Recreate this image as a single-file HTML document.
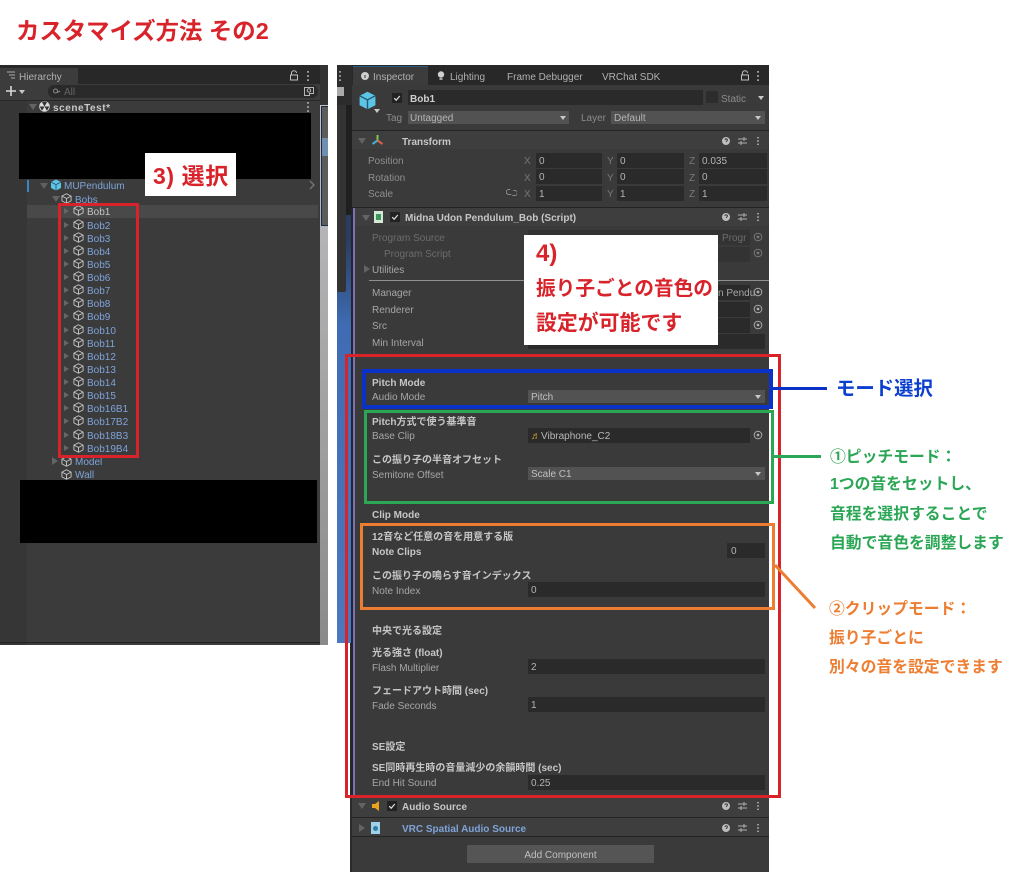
<!DOCTYPE html>
<html lang="ja"><head><meta charset="utf-8"><title>カスタマイズ方法 その2</title>
<style>
html,body{margin:0;padding:0;background:#fff}
#p{position:relative;width:1024px;height:877px;overflow:hidden;background:#fff;font-family:"Liberation Sans","Noto Sans CJK JP",sans-serif;filter:blur(.35px)}
#p div,#p span,#p svg{position:absolute}
.t{font-size:10px;line-height:12px;height:12px;white-space:nowrap;color:#a6a6a6;margin-top:2px}
.b{font-weight:bold;color:#c6c6c6}
.d{color:#707070}
.f{background:#2a2a2a;height:15px}
.dd{background:#525252;height:13px}
.v{font-size:10px;line-height:14px;color:#b4b4b4;white-space:nowrap;left:3px;top:2px}
.r{left:0;width:300px;height:12px}
.r svg{width:11px;height:11px;left:73px;top:0}
.r span{left:87px;top:2px;font-size:10px;line-height:12px;color:#7ea3d9;white-space:nowrap}
.r i{position:absolute;left:64px;top:3px;width:0;height:0;border-left:5px solid #666;border-top:3px solid transparent;border-bottom:3px solid transparent}
.sep{left:352px;width:417px;height:1px;background:#232323}
.box{box-sizing:border-box;background:transparent}
.ar{width:0;height:0;border-left:3px solid transparent;border-right:3px solid transparent;border-top:4px solid #c8c8c8}
.tr{width:0;height:0;border-left:4px solid transparent;border-right:4px solid transparent;border-top:6px solid #636363}
.tl{width:0;height:0;border-left:6px solid #636363;border-top:4px solid transparent;border-bottom:4px solid transparent}
.ck{width:10px;height:10px;background:#222}
.ann{font-weight:bold;white-space:nowrap}
</style></head><body>
<svg width="0" height="0" style="position:absolute"><defs>
<symbol id="c" viewBox="0 0 12 12"><path d="M6 .8 11 3.4v5.2L6 11.2 1 8.6V3.4zM1 3.4 6 6l5-2.6M6 6v5.2" fill="none" stroke="#c6c6c6" stroke-width="1"/></symbol>
<symbol id="k" viewBox="0 0 12 12"><path d="M6 .5 11 3v6L6 11.5 1 9V3z" fill="#5cc4e6"/><path d="M1 3 6 5.6 11 3M6 5.6v5.9" fill="none" stroke="#2a5a70" stroke-width=".9"/></symbol>
<symbol id="h" viewBox="0 0 44 10"><circle cx="5" cy="5" r="4" fill="#bdbdbd"/><path d="M4 4c0-1.5 2.4-1.5 2.4 0 0 1-1.2 1-1.2 2" fill="none" stroke="#333" stroke-width=".9"/><path d="M17 3h9M17 7h9" stroke="#b0b0b0" stroke-width="1"/><path d="M23 1v4M20 5v4" stroke="#b0b0b0" stroke-width="1"/><path d="M37 1v1.4M37 4.3v1.4M37 7.6V9" stroke="#c0c0c0" stroke-width="1.5"/></symbol>
<symbol id="o" viewBox="0 0 10 10"><circle cx="5" cy="5" r="3.8" fill="none" stroke="#aaa"/><circle cx="5" cy="5" r="1.4" fill="#aaa"/></symbol>
<symbol id="m" viewBox="0 0 4 12"><path d="M2 1v1.8M2 5.1v1.8M2 9.2V11" stroke="#c0c0c0" stroke-width="1.5"/></symbol>
<symbol id="l" viewBox="0 0 10 11"><path d="M2.5 5V3a2.5 2.3 0 0 1 5 0M1.5 5h7v5h-7z" fill="none" stroke="#c0c0c0"/></symbol>
<symbol id="ch" viewBox="0 0 10 10"><path d="M2.2 5.2 4.2 7.2 7.8 3" fill="none" stroke="#ddd" stroke-width="1.2"/></symbol>
</defs></svg>
<div id="p">

<div class="ann" style="left:16px;top:15px;font-size:23.4px;line-height:32px;color:#d9232b">カスタマイズ方法 その2</div>

<!-- Hierarchy -->
<div style="left:0;top:65px;width:328px;height:580px;background:#3b3b3b"></div>
<div style="left:0;top:100px;width:27px;height:545px;background:#363636"></div>
<div style="left:0;top:65px;width:328px;height:19px;background:#282828"></div>
<div style="left:0;top:68px;width:78px;height:16px;background:#3c3c3c"></div>
<svg style="left:6px;top:71px" width="10" height="9" viewBox="0 0 10 9"><path d="M1 1h8M3 4h6M5 7h4" stroke="#aaa"/></svg>
<div class="t" style="left:19px;top:70px;color:#b0b0b0">Hierarchy</div>
<svg style="left:289px;top:70px" width="10" height="11"><use href="#l"/></svg>
<svg style="left:306px;top:70px" width="4" height="12"><use href="#m"/></svg>
<div style="left:0;top:84px;width:328px;height:16px;background:#3c3c3c;border-bottom:1px solid #262626"></div>
<svg style="left:5px;top:85px" width="12" height="12"><path d="M6 1v10M1 6h10" stroke="#d8d8d8" stroke-width="1.6"/></svg>
<div class="ar" style="left:19px;top:90px"></div>
<div style="left:48px;top:85px;width:270px;height:13px;background:#2a2a2a;border-radius:6px"></div>
<svg style="left:52px;top:87px" width="9" height="9"><circle cx="3.5" cy="4" r="2" fill="none" stroke="#888"/><path d="M5 5.5 8 4" stroke="#888"/></svg>
<div class="t" style="left:64px;top:85px;color:#666">All</div>
<svg style="left:303px;top:86px" width="12" height="11"><path d="M1.500 1.500h9v6h-4v2h-5z" fill="none" stroke="#b5b5b5"/><circle cx="6" cy="4.500" r="1.700" fill="none" stroke="#b5b5b5"/></svg>
<div class="tr" style="left:29px;top:104px"></div>
<svg style="left:39px;top:101px" width="11" height="11"><circle cx="5.500" cy="5.500" r="5.300" fill="#ddd"/><path d="M5.500 5.500 3 1.300A5 5 0 0 1 8 1.300zM5.500 5.500 10.300 5.500 8 9.800zM5.500 5.500 3 9.800 .7 5.500z" fill="#333"/></svg>
<div class="t b" style="left:53px;top:101px;letter-spacing:.55px;color:#c9c9c9">sceneTest*</div>
<svg style="left:306px;top:101px" width="4" height="12"><use href="#m"/></svg>
<div style="left:19px;top:113px;width:292px;height:66px;background:#000"></div>
<div style="left:27px;top:180px;width:2px;height:12px;background:#3a86c0"></div>
<div class="tr" style="left:40px;top:183px;border-top-color:#5f5f5f"></div>
<svg style="left:50px;top:179px" width="12" height="12"><use href="#k"/></svg>
<div class="t" style="left:64px;top:179px;color:#7ea3d9">MUPendulum</div>
<svg style="left:309px;top:180px" width="6" height="10"><path d="M1 1 5 5 1 9" fill="none" stroke="#777" stroke-width="1.300"/></svg>
<div class="tr" style="left:52px;top:196px"></div>
<svg style="left:61px;top:193px" width="11" height="11"><use href="#c"/></svg>
<div class="t" style="left:75px;top:193px;color:#7ea3d9">Bobs</div>
<div style="left:27px;top:205px;width:291px;height:13px;background:#494949"></div>

<div class="r" style="top:205px"><i></i><svg><use href="#c"/></svg><span style="color:#c4c4c4">Bob1</span></div>
<div class="r" style="top:219px"><i></i><svg><use href="#c"/></svg><span>Bob2</span></div>
<div class="r" style="top:232px"><i></i><svg><use href="#c"/></svg><span>Bob3</span></div>
<div class="r" style="top:245px"><i></i><svg><use href="#c"/></svg><span>Bob4</span></div>
<div class="r" style="top:258px"><i></i><svg><use href="#c"/></svg><span>Bob5</span></div>
<div class="r" style="top:271px"><i></i><svg><use href="#c"/></svg><span>Bob6</span></div>
<div class="r" style="top:284px"><i></i><svg><use href="#c"/></svg><span>Bob7</span></div>
<div class="r" style="top:297px"><i></i><svg><use href="#c"/></svg><span>Bob8</span></div>
<div class="r" style="top:310px"><i></i><svg><use href="#c"/></svg><span>Bob9</span></div>
<div class="r" style="top:324px"><i></i><svg><use href="#c"/></svg><span>Bob10</span></div>
<div class="r" style="top:337px"><i></i><svg><use href="#c"/></svg><span>Bob11</span></div>
<div class="r" style="top:350px"><i></i><svg><use href="#c"/></svg><span>Bob12</span></div>
<div class="r" style="top:363px"><i></i><svg><use href="#c"/></svg><span>Bob13</span></div>
<div class="r" style="top:376px"><i></i><svg><use href="#c"/></svg><span>Bob14</span></div>
<div class="r" style="top:389px"><i></i><svg><use href="#c"/></svg><span>Bob15</span></div>
<div class="r" style="top:402px"><i></i><svg><use href="#c"/></svg><span>Bob16B1</span></div>
<div class="r" style="top:415px"><i></i><svg><use href="#c"/></svg><span>Bob17B2</span></div>
<div class="r" style="top:429px"><i></i><svg><use href="#c"/></svg><span>Bob18B3</span></div>
<div class="r" style="top:442px"><i></i><svg><use href="#c"/></svg><span>Bob19B4</span></div>
<div class="tl" style="left:52px;top:457px"></div>
<svg style="left:61px;top:456px" width="11" height="11"><use href="#c"/></svg>
<div class="t" style="left:75px;top:455px;color:#7ea3d9">Model</div>
<svg style="left:61px;top:469px" width="11" height="11"><use href="#c"/></svg>
<div class="t" style="left:75px;top:468px;color:#7ea3d9">Wall</div>
<div style="left:20px;top:480px;width:297px;height:63px;background:#000"></div>

<div style="left:320px;top:105px;width:8px;height:540px;background:linear-gradient(#c2c4ca,#b0b0b2 30%,#8a8a8a 100%)"></div>
<div style="left:320px;top:65px;width:8px;height:40px;background:#333"></div>
<div style="left:321px;top:106px;width:7px;height:120px;background:#5c5c5c;border:1px solid #1c2a48;border-right:0;box-sizing:border-box"></div>
<div style="left:322px;top:138px;width:6px;height:18px;background:#6f8fb0"></div>
<div style="left:0;top:642px;width:320px;height:1px;background:#222"></div>

<!-- strip between -->
<div style="left:337px;top:65px;width:15px;height:578px;background:linear-gradient(#2a3c60 30%,#3f6cb4 45%,#4c78c0 100%)"></div>
<div style="left:337px;top:65px;width:15px;height:40px;background:#2c2c2c"></div>
<div style="left:337px;top:105px;width:15px;height:110px;background:#1f1f1f"></div>
<div style="left:337px;top:105px;width:9px;height:187px;background:#333;border-radius:0 0 2px 2px"></div>
<svg style="left:338px;top:70px" width="4" height="12"><use href="#m"/></svg>
<div style="left:337px;top:87px;width:7px;height:9px;background:#aaa"></div>

<!-- Inspector -->
<div style="left:352px;top:65px;width:417px;height:807px;background:#3a3a3a"></div>
<div style="left:350px;top:643px;width:2px;height:229px;background:#2a2a2a"></div>
<div style="left:352px;top:65px;width:417px;height:20px;background:#282828"></div>
<div style="left:353px;top:66px;width:75px;height:19px;background:#3c3c3c;border-top:1px solid #2a5a80;box-sizing:border-box"></div>
<svg style="left:361px;top:72px" width="8" height="8"><circle cx="4" cy="4" r="4" fill="#d0d0d0"/><path d="M4 3v3" stroke="#333"/></svg>
<div class="t" style="left:373px;top:70px;color:#b0b0b0">Inspector</div>
<svg style="left:437px;top:71px" width="8" height="10"><circle cx="4" cy="3.500" r="3.200" fill="#cfcfcf"/><path d="M2.500 8h3" stroke="#cfcfcf" stroke-width="1.500"/></svg>
<div class="t" style="left:450px;top:70px;color:#b0b0b0">Lighting</div>
<div class="t" style="left:507px;top:70px;color:#b0b0b0">Frame Debugger</div>
<div class="t" style="left:602px;top:70px;color:#b0b0b0">VRChat SDK</div>
<svg style="left:740px;top:70px" width="10" height="11"><use href="#l"/></svg>
<svg style="left:756px;top:70px" width="4" height="12"><use href="#m"/></svg>

<svg style="left:358px;top:91px" width="19" height="19"><use href="#k"/></svg>
<div class="ar" style="left:374px;top:109px"></div>
<div class="ck" style="left:392px;top:93px"></div>
<svg style="left:392px;top:93px" width="10" height="10"><use href="#ch"/></svg>
<div class="f" style="left:408px;top:90px;width:295px"></div>
<div class="t b" style="left:410px;top:92px;color:#cfcfcf">Bob1</div>
<div style="left:706px;top:91px;width:12px;height:12px;background:#2c2c2c"></div>
<div class="t" style="left:721px;top:92px;color:#8c8c8c">Static</div>
<div class="ar" style="left:758px;top:96px"></div>
<div class="t" style="left:386px;top:111px;color:#8c8c8c">Tag</div>
<div class="dd" style="left:408px;top:111px;width:161px"></div>
<div class="t" style="left:410px;top:111px;color:#b4b4b4">Untagged</div>
<div class="ar" style="left:560px;top:116px"></div>
<div class="t" style="left:581px;top:111px;color:#8c8c8c">Layer</div>
<div class="dd" style="left:611px;top:111px;width:154px"></div>
<div class="t" style="left:614px;top:111px;color:#b4b4b4">Default</div>
<div class="ar" style="left:755px;top:116px"></div>

<div class="sep" style="top:130px"></div>
<div style="left:352px;top:131px;width:417px;height:18px;background:#3e3e3e"></div>
<div class="tr" style="left:358px;top:138px"></div>
<svg style="left:371px;top:134px" width="13" height="13"><path d="M6.500 6.500V1" stroke="#7ec850" stroke-width="2"/><path d="M6.500 6.500 1.500 10" stroke="#3fb0e0" stroke-width="2"/><path d="M6.500 6.500 11.500 10" stroke="#e0604a" stroke-width="2"/></svg>
<div class="t b" style="left:402px;top:135px">Transform</div>
<svg style="left:721px;top:136px" width="44" height="10"><use href="#h"/></svg>

<div class="t" style="left:368px;top:154px;color:#8f8f8f">Position</div>
<div class="t" style="left:368px;top:171px;color:#8f8f8f">Rotation</div>
<div class="t" style="left:368px;top:187px;color:#8f8f8f">Scale</div>
<svg style="left:506px;top:188px" width="11" height="9"><path d="M4 1.500H2.500a2.500 2.500 0 0 0 0 5H5M7 2.500h1.500a2.500 2.500 0 0 1 0 5H6" transform="translate(.3 0)" fill="none" stroke="#8a8a8a"/></svg>
<div class="t" style="left:524px;top:154px;color:#777">X</div><div class="t" style="left:607px;top:154px;color:#777">Y</div><div class="t" style="left:689px;top:154px;color:#777">Z</div>
<div class="t" style="left:524px;top:171px;color:#777">X</div><div class="t" style="left:607px;top:171px;color:#777">Y</div><div class="t" style="left:689px;top:171px;color:#777">Z</div>
<div class="t" style="left:524px;top:187px;color:#777">X</div><div class="t" style="left:607px;top:187px;color:#777">Y</div><div class="t" style="left:689px;top:187px;color:#777">Z</div>
<div class="f" style="left:536px;top:153px;width:66px"><span class="v">0</span></div>
<div class="f" style="left:617px;top:153px;width:67px"><span class="v">0</span></div>
<div class="f" style="left:699px;top:153px;width:68px"><span class="v">0.035</span></div>
<div class="f" style="left:536px;top:169px;width:66px"><span class="v">0</span></div>
<div class="f" style="left:617px;top:169px;width:67px"><span class="v">0</span></div>
<div class="f" style="left:699px;top:169px;width:68px"><span class="v">0</span></div>
<div class="f" style="left:536px;top:186px;width:66px"><span class="v">1</span></div>
<div class="f" style="left:617px;top:186px;width:67px"><span class="v">1</span></div>
<div class="f" style="left:699px;top:186px;width:68px"><span class="v">1</span></div>

<div class="sep" style="top:207px"></div>
<div style="left:352px;top:208px;width:417px;height:18px;background:#3e3e3e"></div>
<div class="tr" style="left:362px;top:215px"></div>
<div style="left:374px;top:211px;width:9px;height:12px;background:#d8e8d8"></div>
<div style="left:376px;top:214px;width:5px;height:6px;background:#3a9a5a"></div>
<div class="ck" style="left:390px;top:212px"></div>
<svg style="left:390px;top:212px" width="10" height="10"><use href="#ch"/></svg>
<div class="t b" style="left:405px;top:211px">Midna Udon Pendulum_Bob (Script)</div>
<svg style="left:721px;top:212px" width="44" height="10"><use href="#h"/></svg>

<div style="left:353px;top:208px;width:2px;height:590px;background:#7a72b4"></div>
<div style="left:351px;top:208px;width:2px;height:590px;background:#262626"></div>

<div class="t d" style="left:372px;top:231px;color:#6c6c6c">Program Source</div>
<div class="t d" style="left:384px;top:247px;color:#6c6c6c">Program Script</div>
<div style="left:528px;top:230px;width:222px;height:15px;background:#333"></div>
<div style="left:528px;top:247px;width:222px;height:15px;background:#333"></div>
<div class="t" style="left:722px;top:231px;color:#6c6c6c">Progr</div>
<svg style="left:753px;top:232px" width="10" height="10"><use href="#o" opacity=".55"/></svg>
<svg style="left:753px;top:248px" width="10" height="10"><use href="#o" opacity=".55"/></svg>
<div class="tl" style="left:364px;top:265px"></div>
<div class="t" style="left:372px;top:263px">Utilities</div>
<div style="left:369px;top:280px;width:400px;height:1px;background:#8f8f8f"></div>
<div class="t" style="left:372px;top:286px">Manager</div>
<div class="t" style="left:372px;top:303px">Renderer</div>
<div class="t" style="left:372px;top:319px">Src</div>
<div class="t" style="left:372px;top:336px">Min Interval</div>
<div class="f" style="left:528px;top:285px;width:222px"></div>
<div class="f" style="left:528px;top:302px;width:222px"></div>
<div class="f" style="left:528px;top:318px;width:222px"></div>
<div class="f" style="left:528px;top:334px;width:237px"></div>
<div class="t" style="left:718px;top:286px;color:#a6a6a6">n Pendu</div>
<svg style="left:753px;top:287px" width="10" height="10"><use href="#o"/></svg>
<svg style="left:753px;top:304px" width="10" height="10"><use href="#o"/></svg>
<svg style="left:753px;top:320px" width="10" height="10"><use href="#o"/></svg>

<div class="t b" style="left:372px;top:376px">Pitch Mode</div>
<div class="t" style="left:372px;top:390px">Audio Mode</div>
<div class="dd" style="left:528px;top:390px;width:237px"></div>
<div class="t" style="left:531px;top:390px;color:#c0c0c0">Pitch</div>
<div class="ar" style="left:755px;top:395px"></div>

<div class="t b" style="left:372px;top:415px">Pitch方式で使う基準音</div>
<div class="t" style="left:372px;top:429px">Base Clip</div>
<div class="f" style="left:528px;top:428px;width:222px"></div>
<div class="t" style="left:531px;top:429px;color:#d0a030">♬</div>
<div class="t" style="left:541px;top:429px;color:#b8b8b8">Vibraphone_C2</div>
<svg style="left:753px;top:430px" width="10" height="10"><use href="#o"/></svg>
<div class="t b" style="left:372px;top:453px">この振り子の半音オフセット</div>
<div class="t" style="left:372px;top:468px">Semitone Offset</div>
<div class="dd" style="left:528px;top:467px;width:237px"></div>
<div class="t" style="left:531px;top:467px;color:#c0c0c0">Scale C1</div>
<div class="ar" style="left:755px;top:472px"></div>

<div class="t b" style="left:372px;top:508px">Clip Mode</div>
<div class="t b" style="left:372px;top:530px">12音など任意の音を用意する版</div>
<div class="t b" style="left:372px;top:545px">Note Clips</div>
<div class="f" style="left:727px;top:543px;width:38px"><span class="v" style="left:4px">0</span></div>
<div class="t b" style="left:372px;top:569px">この振り子の鳴らす音インデックス</div>
<div class="t" style="left:372px;top:584px">Note Index</div>
<div class="f" style="left:528px;top:582px;width:237px"><span class="v">0</span></div>

<div class="t b" style="left:372px;top:624px">中央で光る設定</div>
<div class="t b" style="left:372px;top:646px">光る強さ (float)</div>
<div class="t" style="left:372px;top:661px">Flash Multiplier</div>
<div class="f" style="left:528px;top:659px;width:237px"><span class="v">2</span></div>
<div class="t b" style="left:372px;top:684px">フェードアウト時間 (sec)</div>
<div class="t" style="left:372px;top:699px">Fade Seconds</div>
<div class="f" style="left:528px;top:697px;width:237px"><span class="v">1</span></div>
<div class="t b" style="left:372px;top:740px">SE設定</div>
<div class="t b" style="left:372px;top:761px">SE同時再生時の音量減少の余韻時間 (sec)</div>
<div class="t" style="left:372px;top:776px">End Hit Sound</div>
<div class="f" style="left:528px;top:775px;width:237px"><span class="v">0.25</span></div>

<div style="left:352px;top:798px;width:417px;height:19px;background:#3e3e3e"></div>
<div class="sep" style="top:817px"></div>
<div class="tr" style="left:358px;top:803px"></div>
<svg style="left:371px;top:800px" width="11" height="11"><path d="M1 4h3l4-3v10L4 8H1z" fill="#e8a41c"/></svg>
<div class="ck" style="left:387px;top:801px"></div>
<svg style="left:387px;top:801px" width="10" height="10"><use href="#ch"/></svg>
<div class="t b" style="left:402px;top:800px">Audio Source</div>
<svg style="left:721px;top:801px" width="44" height="10"><use href="#h"/></svg>
<div style="left:352px;top:818px;width:417px;height:18px;background:#3e3e3e"></div>
<div class="sep" style="top:836px"></div>
<div class="tl" style="left:359px;top:824px"></div>
<div style="left:371px;top:822px;width:9px;height:12px;background:#9fd0e8"></div>
<div style="left:373px;top:826px;width:5px;height:5px;background:#2f7ea8;border-radius:50%"></div>
<div class="t b" style="left:402px;top:822px;color:#7ea3d9">VRC Spatial Audio Source</div>
<svg style="left:721px;top:823px" width="44" height="10"><use href="#h"/></svg>
<div style="left:467px;top:845px;width:187px;height:18px;background:#555"></div>
<div class="t" style="left:467px;top:848px;width:187px;text-align:center;color:#c0c0c0">Add Component</div>

<!-- Labels -->
<div style="left:145px;top:153px;width:91px;height:43px;background:#fff"></div>
<div class="ann" style="left:153px;top:161px;font-size:23px;letter-spacing:.6px;line-height:30px;color:#d9232b">3) 選択</div>
<div style="left:524px;top:235px;width:194px;height:110px;background:#fff"></div>
<div class="ann" style="left:536px;top:240px;font-size:24px;line-height:28px;color:#d9232b">4)</div>
<div class="ann" style="left:536px;top:275px;font-size:19.7px;line-height:28px;color:#d9232b">振り子ごとの音色の</div>
<div class="ann" style="left:536px;top:310px;font-size:20.9px;line-height:28px;color:#d9232b">設定が可能です</div>

<!-- Frames -->
<div class="box" style="left:58px;top:203px;width:81px;height:255px;border:3px solid #d9232b"></div>
<div class="box" style="left:345px;top:354px;width:436px;height:444px;border:3px solid #d9232b"></div>
<div class="box" style="left:362px;top:369px;width:411px;height:40px;border:4px solid #0a32c8"></div>
<div class="box" style="left:364px;top:410px;width:410px;height:94px;border:3px solid #2aa655"></div>
<div class="box" style="left:360px;top:523px;width:415px;height:87px;border:3px solid #ed7d31"></div>

<div style="left:773px;top:387px;width:54px;height:3px;background:#0a32c8"></div>
<div style="left:774px;top:455px;width:47px;height:3px;background:#2aa655"></div>
<svg style="left:772px;top:562px" width="48" height="50"><path d="M3 3 43 46" stroke="#ed7d31" stroke-width="3"/></svg>

<div class="ann" style="left:836px;top:375px;font-size:19.4px;line-height:28px;color:#0b3fd0">モード選択</div>
<div class="ann" style="left:830px;top:447px;font-size:15.8px;line-height:22px;color:#2aa655">①ピッチモード：</div>
<div class="ann" style="left:830px;top:474px;font-size:15.8px;line-height:22px;color:#2aa655">1つの音をセットし、</div>
<div class="ann" style="left:830px;top:504px;font-size:15.8px;line-height:22px;color:#2aa655">音程を選択することで</div>
<div class="ann" style="left:830px;top:533px;font-size:15.8px;line-height:22px;color:#2aa655">自動で音色を調整します</div>
<div class="ann" style="left:829px;top:599px;font-size:15.8px;line-height:22px;color:#ed7d31">②クリップモード：</div>
<div class="ann" style="left:829px;top:628px;font-size:15.8px;line-height:22px;color:#ed7d31">振り子ごとに</div>
<div class="ann" style="left:829px;top:657px;font-size:15.8px;line-height:22px;color:#ed7d31">別々の音を設定できます</div>
</div>
</body></html>
